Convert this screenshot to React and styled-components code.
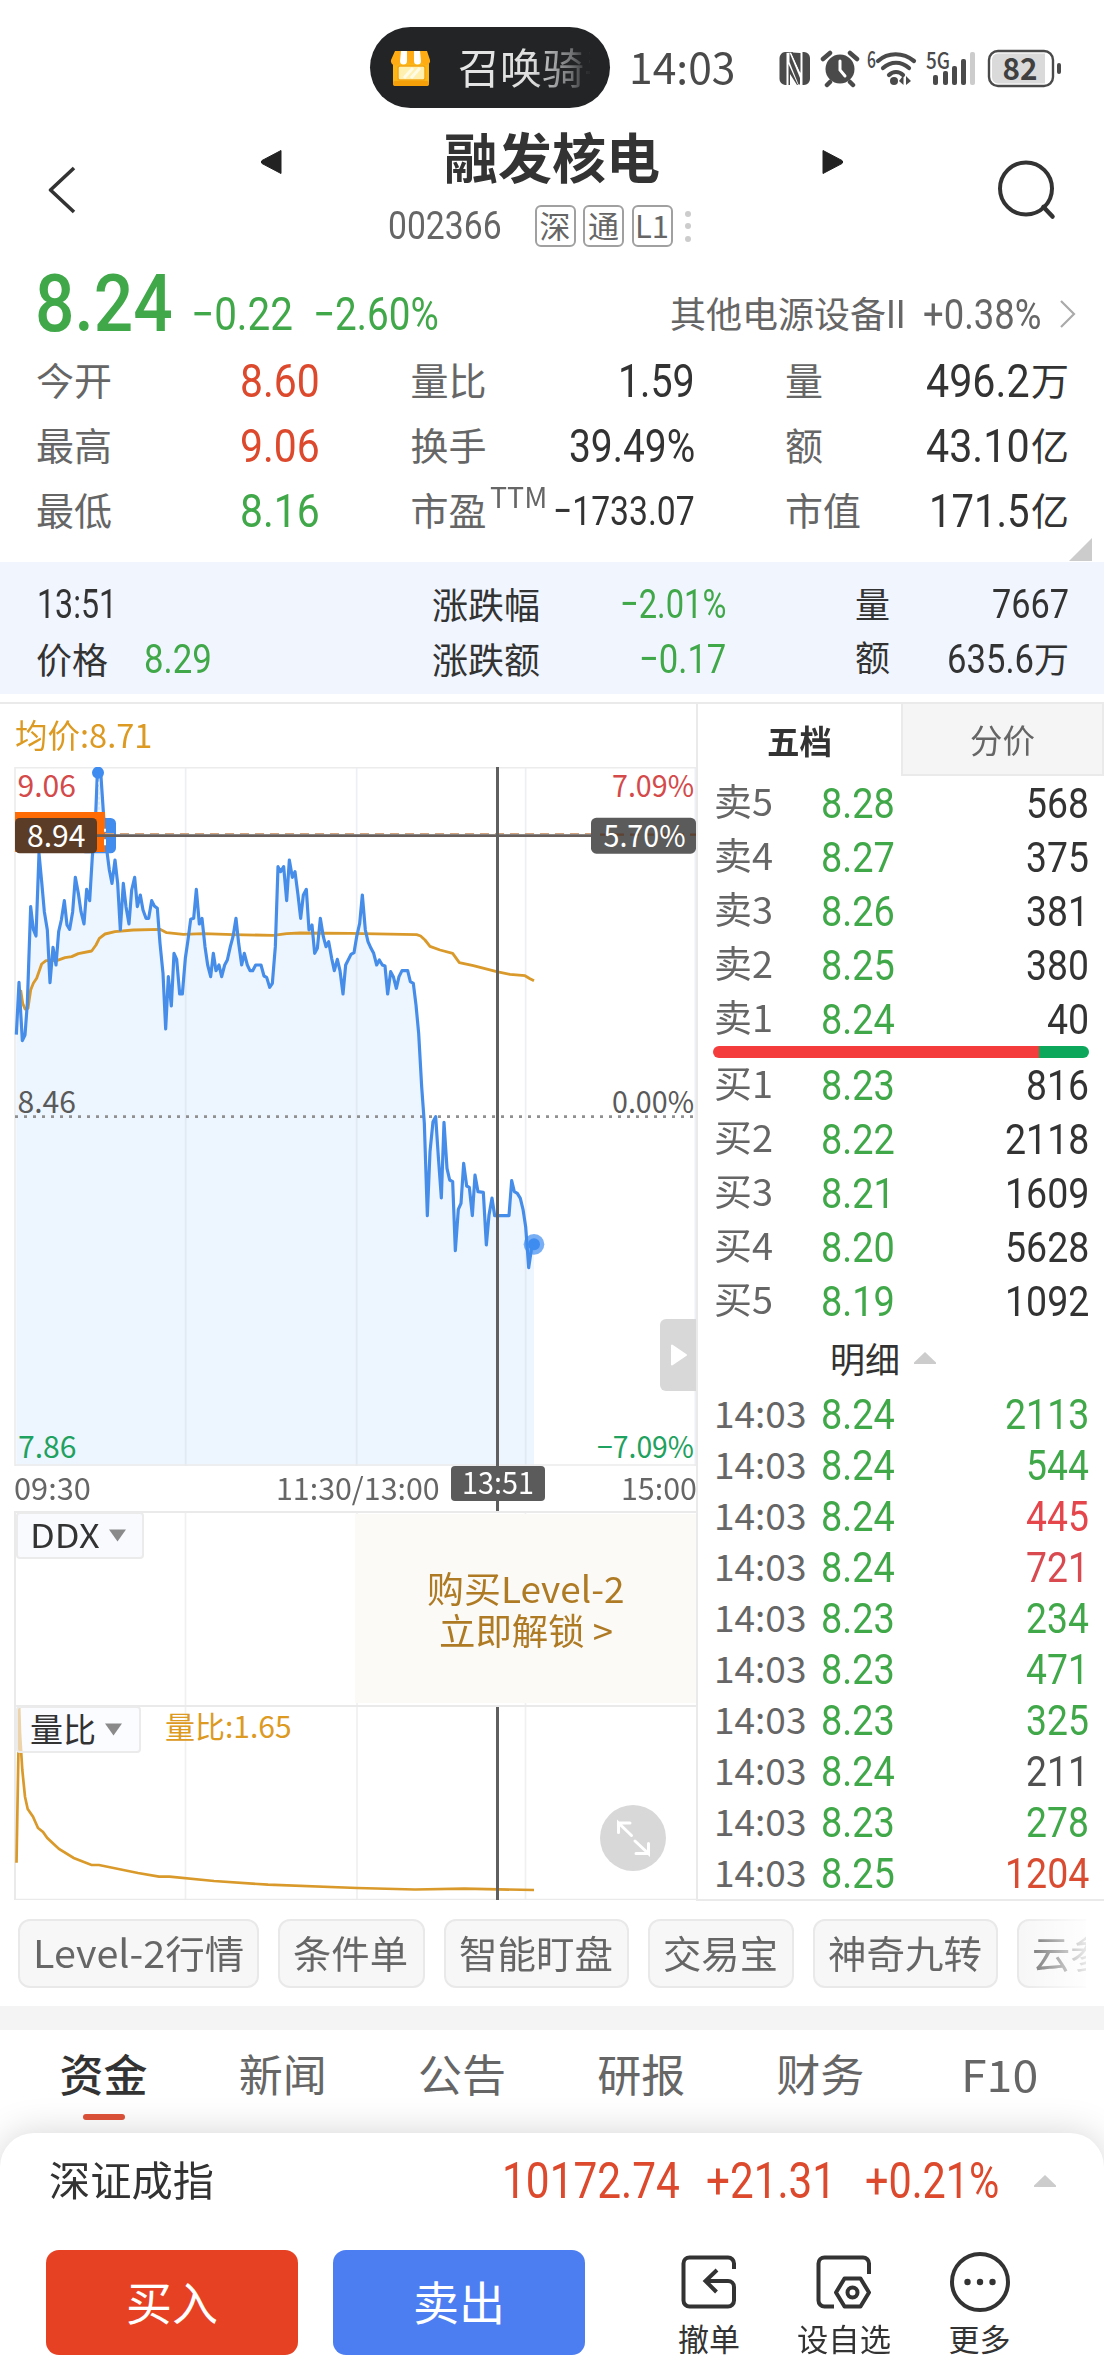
import React, {useLayoutEffect, useRef, useState} from 'react';
import styled, {createGlobalStyle} from 'styled-components';

const GREEN = '#41a84a'
const RED = '#dc492c'
const DARK = '#333'
const GRAY = '#666'

const DIN = "Roboto, 'Liberation Sans', sans-serif"
const CJK = "'Noto Sans CJK SC', 'Noto Sans', sans-serif"

const GlobalStyle = createGlobalStyle`
  * {
    box-sizing: border-box;
  }
  body {
    margin: 0;
    background: #fff;
    font-family: ${CJK};
    color: ${DARK};
  }
  svg {
    display: block;
    flex: none;
  }
`

const FitBox = styled.span`
  display: block;
  flex: none;
  width: ${p => p.$w ? p.$w + 'px' : 'auto'};
  height: ${p => p.$lh || Math.round(p.$size * 1.1)}px;
  line-height: ${p => p.$lh || Math.round(p.$size * 1.1)}px;
  margin-left: ${p => p.$ml || 0}px;
  margin-top: ${p => p.$mt || 0}px;
  font-family: ${p => p.$num ? DIN : CJK};
  font-size: ${p => p.$size}px;
  font-weight: ${p => p.$weight || 400};
  color: ${p => p.$color || DARK};
  white-space: nowrap;
`

const FitInner = styled.span`
  display: inline-block;
  transform-origin: 0 50%;
`

// squeezes a label horizontally so it takes exactly `w` pixels
function Fit({ w, children, ...rest }) {
  const ref = useRef(null)
  const [scale, setScale] = useState(1)

  useLayoutEffect(() => {
    if (w) {
      setScale(w / ref.current.offsetWidth)
    }
  }, [w, children])

  return (
    <FitBox $w={w} {...rest}>
      <FitInner ref={ref} style={{ transform: `scaleX(${scale})` }}>{children}</FitInner>
    </FitBox>
  )
}

const Page = styled.div`
  width: 1104px;
  height: 2376px;
  display: flex;
  flex-direction: column;
  overflow: hidden;
`

/* status bar */

const StatusBar = styled.div`
  height: 108px;
  padding: 27px 0 0 370px;
  display: flex;
  align-items: center;
`

const Pill = styled.div`
  width: 240px;
  height: 81px;
  border-radius: 41px;
  background: #222426;
  display: flex;
  align-items: center;
  padding-left: 20px;
  margin-right: 19px;
  overflow: hidden;
`

const PillText = styled.div`
  width: 132px;
  margin-left: 26px;
  overflow: hidden;
  white-space: nowrap;
  font-size: 42px;
  line-height: 62px;
  margin-top: -4px;
  color: transparent;
  background: linear-gradient(90deg, #e6e6e6 0, #dedede 74px, #77797a 112px, #2a2c2e 130px);
  background-clip: text;
  -webkit-background-clip: text;
`

const StatusIcons = styled.svg`
  margin-left: 43px;
`

function ShopIcon() {
  return (
    <svg width="42" height="38" viewBox="0 0 42 38">
      <rect x="3" y="8" width="36" height="29" rx="3" fill="#fbb615" />
      <rect x="3" y="32" width="36" height="5" rx="2" fill="#f5a008" />
      <rect x="8" y="17" width="27" height="14" rx="2" fill="#fff0b0" stroke="#f2a516" strokeWidth="1.5" />
      <path d="M14 29l9-10M21 29l9-10" stroke="#fffbe6" strokeWidth="3" />
      <path d="M5 2h32l3 9a4 4 0 0 1-8 2 4.500 4.500 0 0 1-7 0 4.500 4.500 0 0 1-7 0 4.500 4.500 0 0 1-8 0 4 4 0 0 1-9-2z" fill="#ffab14" />
      <path d="M11 2h6v10a3.500 3.500 0 0 1-7 0zM24 2h6l1 10a3.500 3.500 0 0 1-7 0z" fill="#fff" />
    </svg>
  )
}

function SystemIcons() {
  return (
    <StatusIcons width="284" height="40" viewBox="0 0 284 40">
      <g fill="#4a4a4a">
        <path d="M7 4h6l9 20V5M7 4a6 6 0 0 0-5.500 6v21a6 6 0 0 0 5.500 6h1.500V4zM26 4a6 6 0 0 1 6 6v21a6 6 0 0 1-6 6h-1.500V4z" />
        <path d="M10.500 4h2.500l9.500 21V5h-1.500v10L14.500 4zM22.500 37h-2.500l-9.500-21v21h1.500V26l7 11z" />
        <path d="M11.500 4.500L22 30v6.500h-1.500L11.500 14z" />
        <circle cx="62" cy="21" r="14.500" />
        <path d="M45 11l7-6M72 5l7 6M52 34l-3 3M72 34l3 3" stroke="#4a4a4a" strokeWidth="4.500" strokeLinecap="round" />
        <path d="M62 13v9l5 6" fill="none" stroke="#fff" strokeWidth="3" strokeLinecap="round" />
      </g>
      <g fill="none" stroke="#4a4a4a" strokeWidth="4.200" strokeLinecap="round">
        <path d="M100 13c10-9 25-9 36 0" />
        <path d="M105 20c8-7 18-7 26 0" />
        <path d="M111 27c4-4 10-4 14 0" />
      </g>
      <circle cx="116" cy="33" r="4" fill="#4a4a4a" />
      <path d="M121 33l4.500-6v10zM133 33l-5-5v9z" fill="#4a4a4a" />
      <g fill="#4a4a4a" fontFamily="Noto Sans CJK SC, sans-serif" fontWeight="500">
        <text x="89" y="19.500" fontSize="23" textLength="9" lengthAdjust="spacingAndGlyphs">6</text>
        <text x="148" y="20.500" fontSize="23" textLength="24" lengthAdjust="spacingAndGlyphs">5G</text>
      </g>
      <g fill="#4a4a4a">
        <rect x="155" y="27" width="5" height="10" rx="2" />
        <rect x="165" y="23" width="5" height="14" rx="2" />
        <rect x="174" y="18" width="5" height="19" rx="2" />
        <rect x="183" y="11" width="5" height="26" rx="2" />
        <rect x="192" y="4" width="5" height="33" rx="2" fill="#ccc" />
      </g>
      <rect x="211" y="3" width="64" height="35" rx="9" fill="#fff" stroke="#4a4a4a" strokeWidth="2.400" />
      <path d="M220 5.500h47v30h-47a6 6 0 0 1-6-6v-18a6 6 0 0 1 6-6z" fill="#dadada" />
      <rect x="279" y="15" width="4" height="11" rx="2" fill="#4a4a4a" />
      <text x="224.500" y="32" fontSize="31" fontWeight="700" fontFamily="Noto Sans CJK SC, sans-serif" fill="#404040" textLength="35" lengthAdjust="spacingAndGlyphs">82</text>
    </StatusIcons>
  )
}

/* stock header */

const Header = styled.div`
  height: 150px;
  padding-top: 25px;
  display: flex;
  align-items: flex-start;
`

const BackIcon = styled.svg`
  margin: 32px 184px 0 48px;
`

const SearchIcon = styled.svg`
  margin: 26px 0 0 152px;
`

const HeaderMain = styled.div`
  width: 584px;
`

const TitleRow = styled.div`
  height: 50px;
  display: flex;
  align-items: center;
  justify-content: space-between;
`

const Triangle = styled.svg`
  margin-top: 8px;
`

const CodeRow = styled.div`
  height: 42px;
  margin-top: 22px;
  padding-left: 128px;
  display: flex;
  align-items: center;
`

const Markets = styled.div`
  display: flex;
  gap: 7.500px;
  margin-left: 32.500px;
`

const Market = styled.span`
  width: 41px;
  height: 42px;
  border: 2px solid #a0a0a0;
  border-radius: 6px;
  display: flex;
  align-items: center;
  justify-content: center;
  font-size: 31px;
  line-height: 34px;
  padding-bottom: 3px;
  color: ${GRAY};
`

const Dots = styled.div`
  margin-left: 12.500px;
  display: grid;
  gap: 6.500px;

  i {
    width: 6px;
    height: 6px;
    border-radius: 3px;
    background: #ccc;
  }
`

/* quote */

const PriceRow = styled.div`
  height: 91px;
  padding-left: 35px;
  display: flex;
  align-items: flex-start;
`

const Sector = styled.div`
  display: flex;
  align-items: center;
  margin: 36px 0 0 auto;
  width: 434px;
  height: 40px;
`

const QuoteSection = styled.div`
  position: relative;
  height: 213px;
  padding-left: 36px;
  display: grid;
  grid-template-columns: 284px 284px 284px;
  grid-template-rows: repeat(3, 65px);
  column-gap: 90.500px;
`

const Cell = styled.div`
  display: flex;
  align-items: center;
  justify-content: space-between;
`

const CellValue = styled.div`
  display: flex;
  align-items: center;
`

const Corner = styled.svg`
  position: absolute;
  right: 12px;
  bottom: 1px;
`

const Band = styled.div`
  height: 132px;
  padding: 15px 0 0 36px;
  background: #f0f5fe;
  display: grid;
  grid-template-columns: 200px 294px 214px;
  grid-template-rows: 55px 55px;
  column-gap: 0;
`

const BandCell = styled(Cell)`
  margin-left: ${p => p.$ml || 0}px;
  margin-right: -${p => p.$ml || 0}px;
  justify-content: ${p => p.$start ? 'flex-start' : 'space-between'};
`

/* main area */

const Main = styled.div`
  margin-top: 8px;
  height: 1199px;
  border-top: 2px solid #eaeaea;
  display: flex;
`

const ChartPane = styled.div`
  width: 698px;
  border-right: 2px solid #eaeaea;
  flex: none;
`

const AvgLine = styled.div`
  height: 63px;
  padding: 2px 0 0 15px;
  display: flex;
  align-items: center;
`

const PriceChart = styled.div`
  position: relative;
  height: 699px;
`

const SideToggle = styled.div`
  position: absolute;
  right: 0;
  top: 552px;
  width: 36px;
  height: 72px;
  border-radius: 6px 0 0 6px;
  background: #d8d8d8;
  display: flex;
  align-items: center;
  padding-left: 10px;
`

const Axis = styled.div`
  position: relative;
  height: 45px;
  padding: 2px 0 0 14px;
  display: flex;
  align-items: center;
`

const CrossTag = styled.div`
  position: absolute;
  left: 451px;
  top: 0;
  width: 94px;
  height: 35px;
  border-radius: 4px;
  background: #5b5b5b;
  padding-left: 11px;
`

const CrossStem = styled.div`
  position: absolute;
  left: 496px;
  top: 0;
  width: 3px;
  height: 45px;
  background: #5d5d5d;
`

const SubPanel = styled.div`
  position: relative;
  height: ${p => p.$h}px;
  display: flex;
  align-items: flex-start;
`

const SubSvg = styled.svg`
  position: absolute;
  left: 0;
  top: 0;
`

const Indicator = styled.div`
  position: relative;
  width: ${p => p.$w}px;
  height: 47px;
  margin: 1px 0 0 16px;
  padding-left: 12px;
  border: 2px solid #ebebeb;
  border-radius: 4px;
  background: ${p => p.$clear ? 'rgba(248,250,255,.6)' : '#f9fafe'};
  display: flex;
  align-items: center;
`

const Promo = styled.div`
  position: relative;
  width: 341px;
  height: 189px;
  margin: 3px 0 0 auto;
  background: #fbfaf6;
  display: flex;
  flex-direction: column;
  align-items: center;
  padding-top: 52px;
`

const ExpandIcon = styled.svg`
  position: relative;
  margin: 100px 30px 0 auto;
`

/* order book */

const BookPane = styled.div`
  width: 406px;
  border-bottom: 2px solid #eaeaea;
`

const BookTabs = styled.div`
  display: flex;
  height: 72px;
`

const BookTab = styled.div`
  width: 203px;
  background: ${p => p.$active ? '#fff' : '#f5f5f5'};
  border: ${p => p.$active ? '0' : '2px solid #eaeaea'};
  border-top: 0;
  display: flex;
  align-items: center;
  justify-content: center;
`

const BookRow = styled.div`
  height: ${p => p.$h}px;
  padding: 1px 15px 0 16px;
  display: grid;
  grid-template-columns: 106.500px 100px 1fr;
  align-items: center;
  justify-items: start;

  > :last-child {
    justify-self: end;
  }
`

const Ratio = styled.div`
  height: 12px;
  margin: 0 15px;
  border-radius: 6px;
  background: linear-gradient(90deg, #f43c3c 0 326px, #0da75b 326px);
`

const DetailHead = styled.div`
  height: 60.500px;
  padding-left: 132px;
  display: flex;
  align-items: center;
`

/* bottom */

const Chips = styled.div`
  position: relative;
  width: 1086px;
  height: 105px;
  padding: 18px 0 0 18px;
  display: flex;
  gap: 19px;
  overflow: hidden;

  &::after {
    content: '';
    position: absolute;
    right: 0;
    top: 0;
    width: 66px;
    height: 105px;
    background: linear-gradient(90deg, rgba(255,255,255,0), rgba(255,255,255,.85));
  }
`

const Chip = styled.div`
  flex: none;
  width: ${p => p.$w}px;
  height: 69px;
  border: 2px solid #e9e9e9;
  border-radius: 12px;
  background: #f7f7f7;
  padding-left: 13px;
  display: flex;
  align-items: center;
`

const Separator = styled.div`
  height: 24px;
  background: #f4f4f4;
`

const NewsTabs = styled.div`
  height: 103px;
  padding-left: 14px;
  display: flex;
`

const NewsTab = styled.div`
  width: 179.200px;
  padding-top: 17px;
  display: flex;
  flex-direction: column;
  align-items: center;

  &::after {
    content: '';
    display: ${p => p.$active ? 'block' : 'none'};
    width: 42px;
    height: 6px;
    margin-top: 15px;
    border-radius: 3px;
    background: #e0533a;
  }
`

const Sheet = styled.div`
  position: relative;
  height: 243px;
  border-radius: 34px 34px 0 0;
  background: #fff;
  box-shadow: 0 0 36px rgba(0,0,0,.17);
`

const IndexRow = styled.div`
  height: 94px;
  padding: 2px 0 0 49px;
  display: flex;
  align-items: center;
`

const Actions = styled.div`
  margin-top: 23px;
  padding-left: 46px;
  display: flex;
`

const TradeButton = styled.button`
  width: 252px;
  height: 105px;
  margin: 0 35px 0 0;
  padding: 0 0 5px;
  border: 0;
  border-radius: 13px;
  background: ${p => p.$color};
  display: flex;
  align-items: center;
  justify-content: center;
`

const ToolItem = styled.div`
  width: ${p => p.$w}px;
  margin-left: ${p => p.$ml}px;
  display: flex;
  flex-direction: column;
  align-items: center;
`

// the intraday lines are kept on a grid three times finer than the screen
const PRICE = `49,1034 57,877 67,1052 75,1035 82,940 92,650 100,718 108,738 117,490 125,575 133,665 142,720 150,878
159,772 168,825 176,725 184,690 193,632 201,705 209,718 218,665 226,562 235,610 243,665 252,702 260,598 269,632
277,500 286,400 292,250 303,260 311,380 319,470 328,540 336,580 345,510 353,580 361,720 370,580 378,650 387,702
395,600 404,562 412,650 421,615 429,660 438,685 446,685 455,632 463,648 472,655 480,760 489,850 497,1017 505,860
514,948 522,790 530,808 539,912 547,912 556,805 564,750 572,688 581,685 589,598 598,702 606,685 615,770 623,825
632,860 640,790 648,842 657,825 665,860 674,825 682,810 691,770 699,740 708,685 716,760 725,825 733,790 742,825
750,842 758,842 767,825 783,825 792,858 800,862 809,892 817,880 826,770 834,530 842,545 851,530 860,632 868,510
877,562 885,545 894,615 902,685 910,615 919,598 927,720 936,705 944,790 952,775 961,685 970,740 978,770 986,755
995,805 1003,842 1012,808 1020,842 1029,912 1037,825 1053,793 1062,788 1070,740 1079,700 1087,615 1096,720
1104,755 1113,775 1121,790 1130,825 1138,810 1147,825 1155,828 1163,912 1172,845 1180,860 1189,895 1197,860
1206,842 1223,842 1231,875 1240,880 1248,945 1256,1030 1265,1190 1273,1300 1282,1577 1290,1385 1299,1295
1307,1280 1315,1400 1324,1524 1332,1297 1341,1435 1349,1470 1358,1475 1366,1682 1375,1558 1383,1540 1391,1420
1400,1488 1408,1492 1417,1577 1425,1455 1434,1505 1450,1507 1459,1665 1467,1575 1476,1524 1484,1577 1527,1577
1535,1472 1543,1505 1552,1510 1561,1525 1569,1558 1577,1610 1586,1733 1594,1680 1602,1663`

const AVERAGE = `62,900 68,940 75,957 84,955 92,900 100,880 110,865 125,822 138,812 170,812 195,803 215,800 235,791
275,783 288,765 298,745 315,732 345,725 400,720 480,718 500,728 550,733 610,731 700,734 820,736 860,731 900,729
1050,730 1250,734 1262,738 1275,750 1290,769 1320,780 1358,790 1378,818 1420,827 1490,845 1530,853 1575,857
1590,866 1602,872`

const RATIO_LINE = `16.5,157.7 19.2,3 20,28 22.3,65 25,91.7 27.7,104 33,111.7 38,123 43,127 47.3,133 59,144 73.7,153
91.5,160 99,160 138,168 159,171.7 169.6,171.7 214,176 268,179.7 357,183 415,184.5 464,183.7 534,185`

function ChartText({ x, y, w, fill, size = 30, children }) {
  return (
    <text
      x={x * 3}
      y={(y - 690) * 3}
      fontSize={size * 3}
      fontFamily="Noto Sans CJK SC, sans-serif"
      fill={fill}
      textLength={w * 3}
      lengthAdjust="spacingAndGlyphs"
    >{children}</text>
  )
}

function IntradayChart() {
  return (
    <PriceChart>
      <svg width="696" height="699" viewBox="0 231 2088 2097">
        <polygon points={`49,2328 ${PRICE} 1602,2328`} fill="#edf5fe" />
        <g stroke="#cfd8e4" strokeOpacity=".4" strokeWidth="5">
          <path d="M557 231V2328M1070 231V2328M1577 231V2328M2086 231V2328" />
        </g>
        <path d="M45 2328V233H2088M45 2325H2088" fill="none" stroke="#ececec" strokeWidth="5" />
        <path d="M45 1280H2088" stroke="#909090" strokeWidth="8" strokeDasharray="9 18" />
        <polyline points={AVERAGE} fill="none" stroke="#d99a2b" strokeWidth="8.500" strokeLinejoin="round" />
        <polyline points={PRICE} fill="none" stroke="#458de8" strokeWidth="9.500" strokeLinejoin="round" />
        <circle cx="294" cy="248" r="18" fill="#3f8cf0" />
        <path d="M297 275V366" stroke="#d4e6fd" strokeWidth="5" strokeDasharray="9 6" />
        <rect x="240" y="384" width="108" height="106" rx="16" fill="#428cee" />
        <rect x="45" y="366" width="270" height="120" fill="#ff6c06" />
        <path d="M315 416v9M315 448v18" stroke="#fff" strokeWidth="6" />
        <path d="M315 431H2088" stroke="#d2a37c" strokeWidth="4" strokeDasharray="27 18" />
        <path d="M290 437H2088" stroke="#665f5c" strokeWidth="8" />
        <path d="M1492.500 231V2328" stroke="#5f5f5f" strokeWidth="9" />
        <rect x="45" y="384" width="246" height="106" rx="14" fill="#5b3c27" />
        <rect x="1773" y="383" width="315" height="108" rx="16" fill="#5b5b5b" />
        <path d="M1800 434H2088" stroke="#5e4232" strokeWidth="7" strokeDasharray="27 18" />
        <circle cx="1602" cy="1663" r="31" fill="#3f8cf0" fillOpacity=".7" />
        <circle cx="1602" cy="1663" r="18" fill="#3f8cf0" />
        <ChartText x={27} y={847} w={58.500} fill="#fff">8.94</ChartText>
        <ChartText x={603.500} y={847} w={82} fill="#fff">5.70%</ChartText>
        <ChartText x={17.500} y={797} w={58.500} fill="#d44a4a">9.06</ChartText>
        <ChartText x={612} y={797} w={82} fill="#d44a4a">7.09%</ChartText>
        <ChartText x={17.500} y={1113} w={58.500} fill="#5a5a5a">8.46</ChartText>
        <ChartText x={612} y={1113} w={82} fill="#5a5a5a">0.00%</ChartText>
        <ChartText x={18} y={1458} w={58.500} fill="#1fa160">7.86</ChartText>
        <ChartText x={597} y={1458} w={97} fill="#1fa160">−7.09%</ChartText>
      </svg>
      <SideToggle>
        <svg width="18" height="24" viewBox="0 0 18 24"><path d="M2 2.500v19L16 12z" fill="#fff" stroke="#fff" strokeWidth="2" strokeLinejoin="round" /></svg>
      </SideToggle>
    </PriceChart>
  )
}

const CaretSvg = styled.svg`
  margin-left: 9px;
`

const Caret = () => (
  <CaretSvg width="17" height="13" viewBox="0 0 17 13">
    <path d="M0 0.500h17L8.500 12.500z" fill="#8a8a8a" />
  </CaretSvg>
)

const UpCaretSvg = styled.svg`
  margin-left: ${p => p.$ml}px;
`

const UpCaret = ({ ml }) => (
  <UpCaretSvg $ml={ml} width="22" height="12" viewBox="0 0 22 12">
    <path d="M11 0l11 10.500v1.500H0v-1.500z" fill="#ccc" />
  </UpCaretSvg>
)

const ChevronSvg = styled.svg`
  margin-left: 18px;
`

const SubGrid = ({ h, children }) => (
  <SubSvg width="696" height={h} viewBox={`0 0 696 ${h}`}>
    <path d={`M185.500 0V${h}M357 0V${h}M525.500 0V${h}`} stroke="#f0f0f0" strokeWidth="1.700" />
    <path d={`M15 ${h}V1H696`} fill="none" stroke="#eaeaea" strokeWidth="2" />
    {children}
  </SubSvg>
)

const quotes = [
  ['今开', 76, '8.60', 80, RED], ['量比', 76, '1.59', 77], ['量', 38, '496.2', 104, DARK, '万'],
  ['最高', 76, '9.06', 80, RED], ['换手', 76, '39.49%', 126], ['额', 38, '43.10', 104, DARK, '亿'],
  ['最低', 76, '8.16', 80, GREEN], ['市盈', 76, '−1733.07', 142], ['市值', 76, '171.5', 101, DARK, '亿'],
]

const sells = [['卖5', '8.28', '568'], ['卖4', '8.27', '375'], ['卖3', '8.26', '381'], ['卖2', '8.25', '380'], ['卖1', '8.24', '40']]
const buys = [['买1', '8.23', '816'], ['买2', '8.22', '2118'], ['买3', '8.21', '1609'], ['买4', '8.20', '5628'], ['买5', '8.19', '1092']]

const trades = [
  ['8.24', '2113', GREEN],
  ['8.24', '544', GREEN],
  ['8.24', '445', '#e5464b'],
  ['8.24', '721', '#d94a50'],
  ['8.23', '234', GREEN],
  ['8.23', '471', GREEN],
  ['8.23', '325', GREEN],
  ['8.24', '211', '#505050'],
  ['8.23', '278', GREEN],
  ['8.25', '1204', '#d94c31'],
]

const chips = [['Level-2行情', 241, 211], ['条件单', 147, 115], ['智能盯盘', 185, 154], ['交易宝', 146, 115], ['神奇九转', 185, 154], ['云参数', 146, 115]]

function Level({ row }) {
  return (
    <BookRow $h={54}>
      <Fit w={59.500} $size={37} $color={GRAY} $mt={-6}>{row[0]}</Fit>
      <Fit w={74} $num $size={42} $weight={440} $color={GREEN}>{row[1]}</Fit>
      <Fit w={row[2].length * 21} $num $size={42} $weight={440}>{row[2]}</Fit>
    </BookRow>
  )
}

function App() {
  return (
    <Page>
      <GlobalStyle />
      <StatusBar>
        <Pill>
          <ShopIcon />
          <PillText>召唤骑手</PillText>
        </Pill>
        <Fit w={106} $size={43} $lh={62} $mt={-5} $color="#4a4a4a">14:03</Fit>
        <SystemIcons />
      </StatusBar>

      <Header>
        <BackIcon width="28" height="50" viewBox="0 0 28 50">
          <path d="M26 3L2.500 25 26 47" fill="none" stroke="#333" strokeWidth="3.600" strokeLinejoin="round" />
        </BackIcon>
        <HeaderMain>
          <TitleRow>
            <Triangle width="22" height="26" viewBox="0 0 22 26"><path d="M21 1.500v23L2 14.500q-1.500-1.500 0-3z" fill="#222" stroke="#222" strokeLinejoin="round" /></Triangle>
            <Fit w={216} $size={54} $weight={700} $mt={-6}>融发核电</Fit>
            <Triangle width="22" height="26" viewBox="0 0 22 26"><path d="M1 1.500v23l19-10q1.500-1.500 0-3z" fill="#222" stroke="#222" strokeLinejoin="round" /></Triangle>
          </TitleRow>
          <CodeRow>
            <Fit w={114} $num $size={39} $color={GRAY}>002366</Fit>
            <Markets>
              <Market>深</Market>
              <Market>通</Market>
              <Market>L1</Market>
            </Markets>
            <Dots><i /><i /><i /></Dots>
          </CodeRow>
        </HeaderMain>
        <SearchIcon width="62" height="62" viewBox="0 0 62 62">
          <circle cx="30" cy="29.500" r="26" fill="none" stroke="#333" strokeWidth="4" />
          <path d="M47.500 48l9 9.500" stroke="#333" strokeWidth="4.500" strokeLinecap="round" />
        </SearchIcon>
      </Header>

      <PriceRow>
        <Fit w={138} $num $size={80} $lh={92} $weight={460} $color={GREEN}>8.24</Fit>
        <Fit w={102} $num $size={46} $lh={50} $ml={18} $mt={31} $weight={420} $color={GREEN}>−0.22</Fit>
        <Fit w={126} $num $size={46} $lh={50} $ml={20} $mt={31} $weight={420} $color={GREEN}>−2.60%</Fit>
        <Sector>
          <Fit w={216} $size={36} $mt={-5} $color={GRAY}>其他电源设备</Fit>
          <Fit w={20} $num $size={38} $mt={1} $color={GRAY}>II</Fit>
          <Fit w={118} $num $size={42} $ml={17} $mt={1} $color={GRAY}>+0.38%</Fit>
          <ChevronSvg width="18" height="30" viewBox="0 0 18 30">
            <path d="M2 2l13 13L2 28" fill="none" stroke="#aaa" strokeWidth="2.200" />
          </ChevronSvg>
        </Sector>
      </PriceRow>

      <QuoteSection>
        {quotes.map(([label, lw, value, vw, color, unit]) => (
          <Cell key={label}>
            <Fit w={lw} $size={38} $mt={-5} $color={GRAY}>{label}</Fit>
            {label === '市盈' && <Fit w={57} $size={29} $mt={-34} $ml={-2} $color={GRAY}>TTM</Fit>}
            <CellValue>
              <Fit w={vw} $num $size={label === '市盈' ? 41 : 46} $weight={440} $color={color}>{value}</Fit>
              {unit && <Fit w={38} $size={38} $mt={-5} $ml={1}>{unit}</Fit>}
            </CellValue>
          </Cell>
        ))}
        <Corner width="23" height="23" viewBox="0 0 23 23"><path d="M23 0v23H0z" fill="#ccc" /></Corner>
      </QuoteSection>

      <Band>
        <BandCell $start><Fit w={80} $num $size={41} $ml={1}>13:51</Fit></BandCell>
        <BandCell $ml={196}>
          <Fit w={108} $size={36} $mt={-4}>涨跌幅</Fit>
          <Fit w={106} $num $size={41} $color={GREEN}>−2.01%</Fit>
        </BandCell>
        <BandCell $ml={325}>
          <Fit w={35} $size={35} $mt={-4}>量</Fit>
          <Fit w={77} $num $size={41}>7667</Fit>
        </BandCell>
        <BandCell $start>
          <Fit w={72} $size={36} $mt={-4}>价格</Fit>
          <Fit w={68} $num $size={41} $ml={36} $color={GREEN}>8.29</Fit>
        </BandCell>
        <BandCell $ml={196}>
          <Fit w={108} $size={36} $mt={-4}>涨跌额</Fit>
          <Fit w={87} $num $size={41} $color={GREEN}>−0.17</Fit>
        </BandCell>
        <BandCell $ml={325}>
          <Fit w={35} $size={35} $mt={-8}>额</Fit>
          <CellValue>
            <Fit w={87} $num $size={41}>635.6</Fit>
            <Fit w={35} $size={35} $mt={-5}>万</Fit>
          </CellValue>
        </BandCell>
      </Band>

      <Main>
        <ChartPane>
          <AvgLine><Fit w={137} $size={33} $mt={-5} $color="#dc9a22">均价:8.71</Fit></AvgLine>
          <IntradayChart />
          <Axis>
            <Fit w={77} $size={30} $mt={-4} $color={GRAY}>09:30</Fit>
            <Fit w={164} $size={30} $mt={-4} $ml={185} $color={GRAY}>11:30/13:00</Fit>
            <Fit w={76} $size={30} $mt={-4} $ml={181} $color={GRAY}>15:00</Fit>
            <CrossStem />
            <CrossTag><Fit w={72} $size={30} $lh={31} $color="#fff">13:51</Fit></CrossTag>
          </Axis>
          <SubPanel $h={194}>
            <SubGrid h={194} />
            <Indicator $w={128}>
              <Fit w={70} $size={33} $mt={-4}>DDX</Fit>
              <Caret />
            </Indicator>
            <Promo>
              <Fit w={197} $size={36} $lh={42} $color="#ae7a24">购买Level-2</Fit>
              <Fit w={174} $size={36} $lh={42} $color="#ae7a24">立即解锁 &gt;</Fit>
            </Promo>
          </SubPanel>
          <SubPanel $h={195}>
            <SubGrid h={195}>
              <path d="M15 194.500H696" stroke="#eaeaea" strokeWidth="1.500" />
              <polyline points={RATIO_LINE} fill="none" stroke="#d99a2b" strokeWidth="2.700" />
              <path d="M497.500 2V195" stroke="#5f5f5f" strokeWidth="3" />
            </SubGrid>
            <Indicator $w={125} $clear>
              <Fit w={66} $size={33} $mt={-4}>量比</Fit>
              <Caret />
            </Indicator>
            <Fit w={127} $size={30} $ml={24} $mt={4} $color="#dc9a22">量比:1.65</Fit>
            <ExpandIcon width="66" height="66" viewBox="0 0 66 66">
              <circle cx="33" cy="33" r="33" fill="#d8d8d8" />
              <path d="M31.500 30.500L18.500 18v9.500M18.500 18H30M35 36l13.500 12.500v-10M48.500 48.500H36" fill="none" stroke="#fff" strokeWidth="3" strokeLinecap="round" />
            </ExpandIcon>
          </SubPanel>
        </ChartPane>

        <BookPane>
          <BookTabs>
            <BookTab $active><Fit w={65} $size={33} $weight={700} $mt={-1}>五档</Fit></BookTab>
            <BookTab><Fit w={65} $size={33} $mt={0} $color={GRAY}>分价</Fit></BookTab>
          </BookTabs>
          {sells.map(row => <Level key={row[0]} row={row} />)}
          <Ratio />
          {buys.map(row => <Level key={row[0]} row={row} />)}
          <DetailHead>
            <Fit w={70} $size={35} $mt={-2}>明细</Fit>
            <UpCaret ml={14} />
          </DetailHead>
          {trades.map(([price, volume, color], i) => (
            <BookRow $h={51} key={i}>
              <Fit w={92} $size={37} $mt={-4} $color={GRAY}>14:03</Fit>
              <Fit w={74} $num $size={42} $weight={440} $color={GREEN}>{price}</Fit>
              <Fit w={volume.length * 21} $num $size={42} $weight={440} $color={color}>{volume}</Fit>
            </BookRow>
          ))}
        </BookPane>
      </Main>

      <Chips>
        {chips.map(([text, width, tw]) => (
          <Chip key={text} $w={width}>
            <Fit w={tw} $size={38} $mt={-4} $color={GRAY}>{text}</Fit>
          </Chip>
        ))}
      </Chips>
      <Separator />
      <NewsTabs>
        {['资金', '新闻', '公告', '研报', '财务', 'F10'].map((tab, i) => (
          <NewsTab key={tab} $active={i === 0}>
            <Fit w={i === 5 ? 77 : 88} $size={44} $lh={52} $weight={i === 0 ? 500 : 400} $color={i === 0 ? '#333' : GRAY}>{tab}</Fit>
          </NewsTab>
        ))}
      </NewsTabs>

      <Sheet>
        <IndexRow>
          <Fit w={165} $size={41} $mt={-5}>深证成指</Fit>
          <Fit w={178} $num $size={50} $ml={288} $weight={420} $color={RED}>10172.74</Fit>
          <Fit w={130} $num $size={50} $ml={26} $weight={420} $color={RED}>+21.31</Fit>
          <Fit w={134} $num $size={50} $ml={29} $weight={420} $color={RED}>+0.21%</Fit>
          <UpCaret ml={35} />
        </IndexRow>
        <Actions>
          <TradeButton $color="#e74124"><Fit w={92} $size={46} $lh={54} $color="#fff">买入</Fit></TradeButton>
          <TradeButton $color="#4c7ef2"><Fit w={92} $size={46} $lh={54} $color="#fff">卖出</Fit></TradeButton>
          <ToolItem $w={62} $ml={58}>
            <svg width="56" height="64" viewBox="0 -5 56 64">
              <path d="M53 14V8.500a6 6 0 0 0-6-6H8.500a6 6 0 0 0-6 6v37a6 6 0 0 0 6 6H47a6 6 0 0 0 6-6V32a6 6 0 0 0-6-6H25M36 15L24.500 26 35.500 37" fill="none" stroke="#333" strokeWidth="4" />
            </svg>
            <Fit w={62} $size={31} $lh={40} $mt={4}>撤单</Fit>
          </ToolItem>
          <ToolItem $w={94} $ml={57}>
            <svg width="56" height="64" viewBox="0 -5 56 64">
              <path d="M53 19V8.500a6 6 0 0 0-6-6H8.500a6 6 0 0 0-6 6v37a6 6 0 0 0 6 6H18" fill="none" stroke="#333" strokeWidth="4" />
              <path d="M28.500 23.500h16L53 37.500l-8.500 14h-16l-8.500-14z" fill="none" stroke="#333" strokeWidth="4" strokeLinejoin="round" />
              <circle cx="36.500" cy="37.500" r="5" fill="none" stroke="#333" strokeWidth="4" />
            </svg>
            <Fit w={94} $size={31} $lh={40} $mt={4}>设自选</Fit>
          </ToolItem>
          <ToolItem $w={63} $ml={57}>
            <svg width="62" height="64" viewBox="0 -2 62 64">
              <circle cx="31" cy="30" r="28" fill="none" stroke="#333" strokeWidth="4" />
              <circle cx="18.500" cy="30" r="3.200" fill="#333" />
              <circle cx="31" cy="30" r="3.200" fill="#333" />
              <circle cx="43.500" cy="30" r="3.200" fill="#333" />
            </svg>
            <Fit w={62} $size={31} $lh={40} $mt={4}>更多</Fit>
          </ToolItem>
        </Actions>
      </Sheet>
    </Page>
  );
}

export default App;
